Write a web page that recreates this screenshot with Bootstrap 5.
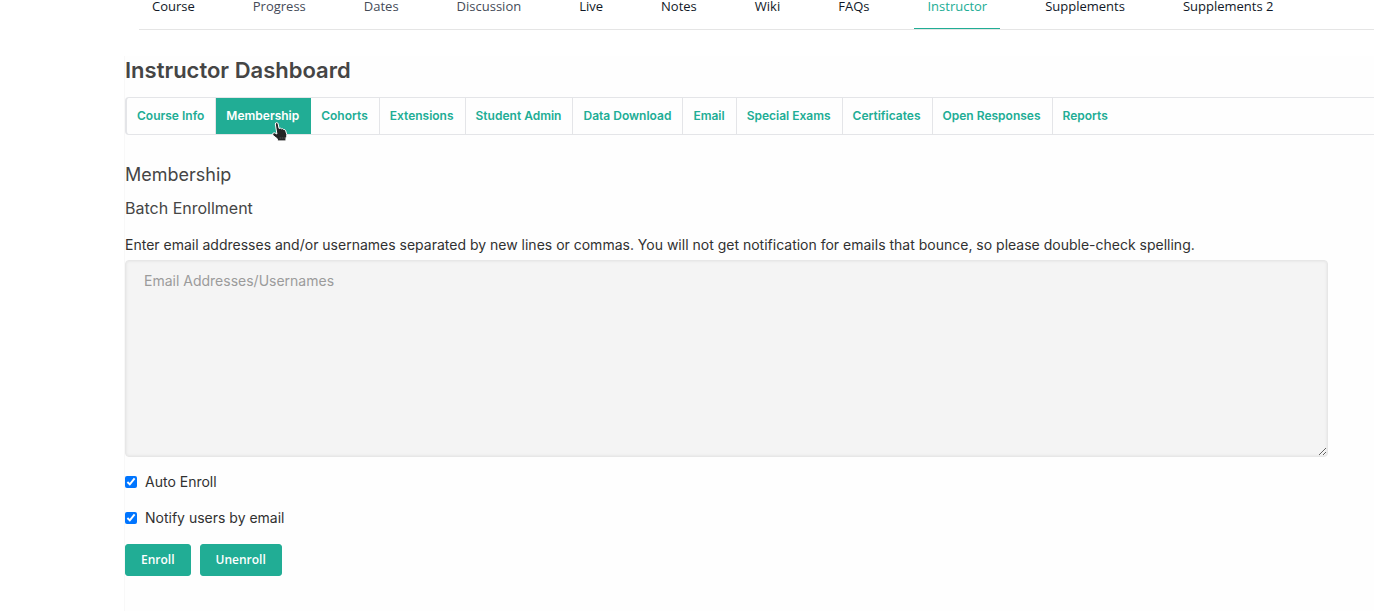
<!DOCTYPE html>
<html lang="en">
<head>
<meta charset="utf-8">
<meta name="viewport" content="width=device-width, initial-scale=1">
<title>Instructor Dashboard</title>
<link rel="stylesheet" href="https://cdn.jsdelivr.net/npm/bootstrap@5.3.0/dist/css/bootstrap.min.css">
<style>
:root { --brand: #21ad95; --line: #e4e5e8; --ink: #454545; }
body { font-family: Inter, "Liberation Sans", sans-serif; font-size: 14px; line-height: 24px; color: #313131; background: #fff; overflow-x: hidden; }
.course-tabs { margin-left: 139px; gap: 32px; border-bottom: 1px solid #e5e5e5; font-family: "Open Sans", sans-serif; font-size: 13px; line-height: 12px; }
.course-tabs .nav-link { padding: 0 13px 16px; color: #111827; border-bottom: 1px solid transparent; white-space: nowrap; }
.course-tabs .nav-link.soft { color: #454b58; }
.course-tabs .nav-link.active { color: var(--brand); border-color: var(--brand); }
.dashboard { margin-left: 124px; margin-top: 26px; min-height: calc(100vh - 56px); border-left: 1px solid #f8f8f8; background: #fefefe; }
.dashboard h1 { font-size: 22px; line-height: 28px; font-weight: 600; color: var(--ink); margin: 0; }
.section-tabs { margin: 13px 0 0 0; border: 1px solid var(--line); border-left-width: 2px; border-right: 0; border-radius: 4px 0 0 4px; font-size: 12px; line-height: 18px; font-weight: 600; }
.section-tabs .nav-link { padding: 9px 11px 9px 10px; color: var(--brand); border-right: 1px solid var(--line); white-space: nowrap; }
.section-tabs .nav-item:last-child .nav-link { border-right: 0; }
.section-tabs .nav-link.active { color: #fff; background: var(--brand); border-color: var(--brand); }
.hand { position: absolute; left: 56px; top: 24px; pointer-events: none; }
.dashboard h2 { font-size: 18px; line-height: 24px; font-weight: 400; color: var(--ink); margin: 28px 0 0; }
.dashboard h3 { font-size: 16px; line-height: 24px; font-weight: 400; color: var(--ink); margin: 9px 0 0; }
.batch { margin: 13px 46px 0 0; }
.batch textarea { height: 197px; margin-top: 3px; padding: 8px 18px; font-size: 14px; line-height: 24px; background: #f4f4f4; border: 1px solid #e7e7e7; border-radius: 4px; box-shadow: inset 0 0 2px 1px #e9e9e9; resize: vertical; }
.batch textarea::placeholder { color: #9b9b9b; opacity: 1; }
.choice { height: 24px; margin-top: 12px; gap: 8px; }
.choice input { width: 12px; height: 12px; margin: 0; accent-color: #0075ff; }
.batch textarea + .choice { margin-top: 13px; }
.actions { margin-top: 14px; gap: 9px; }
.btn-brand { --bs-btn-color: #fff; --bs-btn-bg: var(--brand); --bs-btn-border-color: var(--brand); --bs-btn-hover-color: #fff; --bs-btn-hover-bg: #1b937f; font-family: "Open Sans", sans-serif; font-size: 12px; line-height: 18px; font-weight: 600; padding: 6px 15px; border-radius: 3px; }
</style>
</head>
<body>
<nav aria-label="Course">
  <ul class="nav flex-nowrap course-tabs">
    <li class="nav-item"><a class="nav-link" href="#">Course</a></li>
    <li class="nav-item"><a class="nav-link soft" href="#">Progress</a></li>
    <li class="nav-item"><a class="nav-link soft" href="#">Dates</a></li>
    <li class="nav-item"><a class="nav-link soft" href="#">Discussion</a></li>
    <li class="nav-item"><a class="nav-link" href="#">Live</a></li>
    <li class="nav-item"><a class="nav-link" href="#">Notes</a></li>
    <li class="nav-item"><a class="nav-link" href="#">Wiki</a></li>
    <li class="nav-item"><a class="nav-link" href="#">FAQs</a></li>
    <li class="nav-item"><a class="nav-link active" aria-current="page" href="#">Instructor</a></li>
    <li class="nav-item"><a class="nav-link" href="#">Supplements</a></li>
    <li class="nav-item"><a class="nav-link" href="#">Supplements 2</a></li>
  </ul>
</nav>
<main class="dashboard">
  <h1>Instructor Dashboard</h1>
  <ul class="nav flex-nowrap section-tabs">
    <li class="nav-item"><a class="nav-link" href="#">Course Info</a></li>
    <li class="nav-item position-relative"><a class="nav-link active" aria-current="true" href="#">Membership</a>
      <svg class="hand" width="16" height="20" viewBox="0 0 16 20" aria-hidden="true"><path d="M3.3 2Q3.4.6 4.8.6Q6 .7 6.2 2L7 6.4Q8.4 5.6 9.4 6.8Q10.8 6.2 11.6 7.5Q13.2 7.2 13.7 8.8L14.8 12.6Q15.1 14.4 14 15.8L13.9 18.9H5.6L5.3 16.8L1.2 13.6Q0 12 1.2 11Q2.6 10.2 4.9 12Z" fill="#252525" stroke="#fff" stroke-width="1"/><path d="M8.2 15V17M10.2 15V17M12.2 15V17" stroke="#555" stroke-width=".7"/></svg>
    </li>
    <li class="nav-item"><a class="nav-link" href="#">Cohorts</a></li>
    <li class="nav-item"><a class="nav-link" href="#">Extensions</a></li>
    <li class="nav-item"><a class="nav-link" href="#">Student Admin</a></li>
    <li class="nav-item"><a class="nav-link" href="#">Data Download</a></li>
    <li class="nav-item"><a class="nav-link" href="#">Email</a></li>
    <li class="nav-item"><a class="nav-link" href="#">Special Exams</a></li>
    <li class="nav-item"><a class="nav-link" href="#">Certificates</a></li>
    <li class="nav-item"><a class="nav-link" href="#">Open Responses</a></li>
    <li class="nav-item"><a class="nav-link" href="#">Reports</a></li>
  </ul>
  <h2>Membership</h2>
  <h3>Batch Enrollment</h3>
  <form class="batch">
    <label class="d-block" for="people">Enter email addresses and/or usernames separated by new lines or commas. You will not get notification for emails that bounce, so please double-check spelling.</label>
    <textarea class="form-control" id="people" placeholder="Email Addresses/Usernames"></textarea>
    <div class="choice d-flex align-items-center"><input type="checkbox" id="auto" checked><label for="auto">Auto Enroll</label></div>
    <div class="choice d-flex align-items-center"><input type="checkbox" id="notify" checked><label for="notify">Notify users by email</label></div>
    <div class="actions d-flex">
      <button type="button" class="btn btn-brand">Enroll</button>
      <button type="button" class="btn btn-brand">Unenroll</button>
    </div>
  </form>
</main>
<script src="https://cdn.jsdelivr.net/npm/bootstrap@5.3.0/dist/js/bootstrap.bundle.min.js"></script>
</body>
</html>
